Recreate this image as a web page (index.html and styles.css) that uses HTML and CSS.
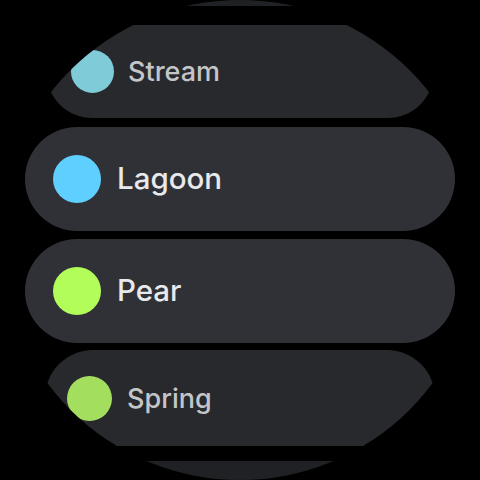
FILE: index.html
```html
<!DOCTYPE html>
<html>
<head>
<meta charset="utf-8">
<link rel="stylesheet" href="styles.css">
</head>
<body>
<div class="screen">
  <div class="list">
    <div class="chip chip-edge"></div>
    <div class="chip chip-mid chip-stream">
      <span class="dot dot-stream"></span>
      <span class="label">Stream</span>
    </div>
    <div class="chip chip-full">
      <span class="dot dot-lagoon"></span>
      <span class="label">Lagoon</span>
    </div>
    <div class="chip chip-full chip-pear">
      <span class="dot dot-pear"></span>
      <span class="label">Pear</span>
    </div>
    <div class="chip chip-mid chip-spring">
      <span class="dot dot-spring"></span>
      <span class="label">Spring</span>
    </div>
    <div class="chip chip-edge chip-bottom"></div>
  </div>
</div>
</body>
</html>
```
FILE: styles.css
```css
html, body {
  margin: 0;
  padding: 0;
  background: #000;
}
body {
  width: 480px;
  height: 480px;
  overflow: hidden;
  font-family: Inter, Roboto, "Liberation Sans", sans-serif;
}
.screen {
  width: 480px;
  height: 480px;
  border-radius: 50%;
  overflow: hidden;
  background: #000;
}
.list {
  display: flex;
  flex-direction: column;
  align-items: center;
  margin-top: -74px;
}
.chip {
  display: flex;
  align-items: center;
  box-sizing: border-box;
  flex: none;
}
.chip-edge {
  width: 340px;
  height: 80px;
  border-radius: 40px;
  background: #202124;
}
.chip-bottom {
  margin-top: 15px;
}
.chip-mid {
  background: #28292d;
  color: #c4c5c8;
  font-size: 27px;
  font-weight: 500;
}
.chip-stream {
  margin-top: 19px;
  width: 388px;
  height: 93px;
  border-radius: 46.5px;
  padding-left: 25px;
  gap: 14px;
}
.chip-spring {
  margin-top: 7px;
  width: 390px;
  height: 96px;
  border-radius: 48px;
  padding-left: 22px;
  gap: 15px;
}
.chip-full {
  margin-top: 9px;
  width: 430px;
  height: 104px;
  border-radius: 52px;
  padding-left: 28px;
  gap: 16px;
  background: #303136;
  color: #e8e9ec;
  font-size: 29.5px;
  font-weight: 500;
}
.chip-pear {
  margin-top: 8px;
}
.dot {
  flex: none;
  border-radius: 50%;
}
.chip-full .dot {
  width: 48px;
  height: 48px;
}
.chip-stream .dot {
  width: 43px;
  height: 43px;
}
.chip-spring .dot {
  width: 45px;
  height: 45px;
}
.dot-stream { background: #80cbd8; }
.dot-lagoon { background: #5fcfff; }
.dot-pear { background: #b3fd5a; }
.dot-spring { background: #a4de5e; }
.label {
  line-height: 1;
}
```
